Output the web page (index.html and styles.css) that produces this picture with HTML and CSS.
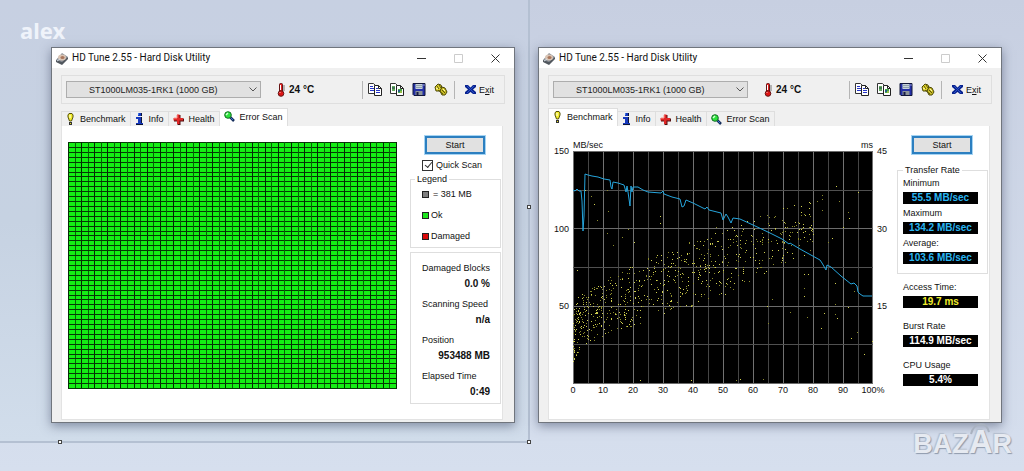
FILE: index.html
```html
<!DOCTYPE html>
<html lang="en">
<head>
<meta charset="utf-8">
<title>HD Tune 2.55 - Hard Disk Utility</title>
<link rel="stylesheet" href="styles.css">
</head>
<body>
<svg class="sprites" aria-hidden="true">
  <symbol id="i-disk" viewBox="0 0 13 13">
    <path d="M1 8L7 1l6 4-6 7-5-2z" fill="#8b9199"/><path d="M1 8l6 2 6-5v2l-6 6-6-3z" fill="#51575e"/>
    <ellipse cx="7" cy="5.5" rx="4" ry="3" fill="#d9c4b4"/><ellipse cx="7.5" cy="5.5" rx="2" ry="1.5" fill="#a9765c"/><path d="M2 9l3-2" stroke="#d5dde4"/>
  </symbol>
  <symbol id="i-temp" viewBox="0 0 8 14">
    <rect x="2.5" y=".5" width="3" height="9" rx="1" fill="#e32020" stroke="#641414"/><circle cx="4" cy="10.5" r="2.8" fill="#df1515" stroke="#641414"/><path d="M3.5 2v5" stroke="#fff"/><path d="M2.5 10l1-1" stroke="#fbb"/><path d="M7 2v6" stroke="#777"/>
  </symbol>
  <symbol id="i-copy" viewBox="0 0 14 13">
    <path d="M.5.5h5l2 2v8h-7z" fill="#fff" stroke="#333"/><path d="M2 3.5h3M2 5.500h4M2 7.500h4" stroke="#2736c8"/>
    <path d="M6.500 2.500h4l3 3v7h-7z" fill="#fff" stroke="#222"/><path d="M10.500 2.500v3h3" fill="none" stroke="#222"/><path d="M8 5.500h2M8 7.500h4M8 9.500h4" stroke="#2736c8"/>
  </symbol>
  <symbol id="i-shot" viewBox="0 0 14 13">
    <path d="M.5.5h5l2 2v8h-7z" fill="#fff" stroke="#333"/><path d="M2 3h3v5H2z" fill="#64ae61"/><path d="M2 5h3" stroke="#244"/>
    <path d="M6.500 2.500h4l3 3v7h-7z" fill="#fff" stroke="#222"/><path d="M10.500 2.500v3h3" fill="none" stroke="#222"/><path d="M8 6h4v4H8z" fill="#4aa847"/><path d="M8 7h2v2H8z" fill="#275f86"/><path d="M10 9h2" stroke="#e2d64a"/>
  </symbol>
  <symbol id="i-save" viewBox="0 0 13 13">
    <path d="M.5.5h12v12h-11l-1-1z" fill="#2430a8" stroke="#111638"/><path d="M3 1h7v5H3z" fill="#c8d3da"/><path d="M3 2.500h7M3 4.500h7" stroke="#8fa0ad"/><path d="M3 8h7v4H3z" fill="#8c9499"/><path d="M4 9h2v3H4z" fill="#161a48"/><path d="M11 2h1" stroke="#fff"/>
  </symbol>
  <symbol id="i-opts" viewBox="0 0 14 13">
    <path d="M1 4l3-3 3 1 1 3-2 3-4 0z" fill="#e5d72b" stroke="#4b4705"/><path d="M6 8l2-4 3 1 2 4-2 3-3 0z" fill="#c9bc24" stroke="#4b4705"/><path d="M3 3l2 3M8 7l3 3M4 7l5 4M5 2l2 3" stroke="#5c5609"/><path d="M2 5l2 1M9 6l2 2" stroke="#fffbb0"/>
  </symbol>
  <symbol id="i-exit" viewBox="0 0 11 11">
    <path d="M0 1h3l2.500 2.500L8 1h3v2L8 5.500 11 8v2H8L5.500 8 3 10H0V8l3-2.500L0 3z" fill="#0a2490"/><path d="M2 2l7 7M9 2L2 9" stroke="#2750c9"/>
  </symbol>
  <symbol id="i-bench" viewBox="0 0 7 12">
    <path d="M1 2l1-1.500h3L6 2v2L4.500 8h-2L1 4z" fill="#f4ee2c" stroke="#55500a"/><rect x="2.500" y="9.500" width="2" height="2" fill="#e4dd20" stroke="#333"/><path d="M3 2v3" stroke="#fff"/>
  </symbol>
  <symbol id="i-info" viewBox="0 0 7 12">
    <path d="M2 0h3v3H2zM1 4h4v6h2v2H0v-2h2V6H0V4z" fill="#1638bd"/><path d="M5.500 0v3M5.500 4v6M0 11.500h7" stroke="#0a1437"/><path d="M2 1h1" stroke="#70b7ff"/>
  </symbol>
  <symbol id="i-health" viewBox="0 0 11 11">
    <path d="M4.500 1h3v3.500H11v3H7.500V11h-3V7.500H1v-3h3.500z" fill="#530e0e"/><path d="M4 .5h2.500V4H10v2.500H6.500V10H4V6.500H.5V4H4z" fill="#e12727"/><path d="M4 1v3H1" fill="none" stroke="#ff9b91"/>
  </symbol>
  <symbol id="i-scan" viewBox="0 0 11 11">
    <path d="M6 6l4 4" stroke="#142c5b" stroke-width="2.500"/><path d="M6 6l3 3" stroke="#3977cf"/><circle cx="4" cy="4" r="3.300" fill="#2be33b" stroke="#146c24"/><path d="M2 4l2-2" stroke="#d5ffd8" stroke-width="1.500"/>
  </symbol>
</svg>

<main class="desktop">
  <div class="sheet"><i class="handle right"></i><i class="handle corner"></i><i class="handle left"></i></div>
  <span class="owner">alex</span>

  <section class="window">
    <header class="titlebar">
      <svg class="disk"><use href="#i-disk"/></svg><h1>HD Tune 2.55 - Hard Disk Utility</h1>
      <button class="cap" aria-label="Minimize"><svg viewBox="0 0 9 9"><path d="M0 4.500h9"/></svg></button>
      <button class="cap" aria-label="Maximize" disabled><svg viewBox="0 0 9 9"><path d="M.5.5h8v8h-8z"/></svg></button>
      <button class="cap" aria-label="Close"><svg viewBox="0 0 9 9"><path d="M.5.5l8 8M8.500.5l-8 8"/></svg></button>
    </header>
    <div class="body">
      <div class="toolbar">
        <span class="picker"><select aria-label="Drive"><option>ST1000LM035-1RK1 (1000 GB)</option></select><svg viewBox="0 0 8 5"><path d="M.5.5L4 4 7.500.5"/></svg></span>
        <svg class="temp"><use href="#i-temp"/></svg><b class="degrees">24 °C</b>
        <div class="tools">
          <button aria-label="Copy text"><svg><use href="#i-copy"/></svg></button>
          <button aria-label="Copy screenshot"><svg><use href="#i-shot"/></svg></button>
          <button aria-label="Save"><svg><use href="#i-save"/></svg></button>
          <button aria-label="Options"><svg><use href="#i-opts"/></svg></button>
        </div>
        <button class="exit"><svg><use href="#i-exit"/></svg><span>E<u>x</u>it</span></button>
      </div>
      <nav class="tabs">
        <button class="tab first"><svg class="slim"><use href="#i-bench"/></svg>Benchmark</button>
        <button class="tab"><svg class="slim"><use href="#i-info"/></svg>Info</button>
        <button class="tab"><svg><use href="#i-health"/></svg>Health</button>
        <button class="tab active"><svg><use href="#i-scan"/></svg>Error Scan</button>
      </nav>
      <div class="page scan">
        <svg class="blocks" viewBox="0 0 329 247" preserveAspectRatio="none" shape-rendering="crispEdges" aria-label="Block map">
          <rect width="329" height="247" fill="#14ee14"/><g id="block-lines"></g>
        </svg>
        <aside class="side">
          <button class="start">Start</button>
          <label class="quick"><input type="checkbox" checked>Quick Scan</label>
          <fieldset class="legend"><legend>Legend</legend>
            <p><i class="sw grey"></i><span class="eq">= 381 MB</span></p><p><i class="sw green"></i>Ok</p><p><i class="sw red"></i>Damaged</p>
          </fieldset>
          <dl class="stats">
            <dt>Damaged Blocks</dt><dd>0.0 %</dd>
            <dt>Scanning Speed</dt><dd>n/a</dd>
            <dt>Position</dt><dd>953488 MB</dd>
            <dt>Elapsed Time</dt><dd>0:49</dd>
          </dl>
        </aside>
      </div>
    </div>
  </section>

  <section class="window">
    <header class="titlebar">
      <svg class="disk"><use href="#i-disk"/></svg><h1>HD Tune 2.55 - Hard Disk Utility</h1>
      <button class="cap" aria-label="Minimize"><svg viewBox="0 0 9 9"><path d="M0 4.500h9"/></svg></button>
      <button class="cap" aria-label="Maximize" disabled><svg viewBox="0 0 9 9"><path d="M.5.5h8v8h-8z"/></svg></button>
      <button class="cap" aria-label="Close"><svg viewBox="0 0 9 9"><path d="M.5.5l8 8M8.500.5l-8 8"/></svg></button>
    </header>
    <div class="body">
      <div class="toolbar">
        <span class="picker"><select aria-label="Drive"><option>ST1000LM035-1RK1 (1000 GB)</option></select><svg viewBox="0 0 8 5"><path d="M.5.5L4 4 7.500.5"/></svg></span>
        <svg class="temp"><use href="#i-temp"/></svg><b class="degrees">24 °C</b>
        <div class="tools">
          <button aria-label="Copy text"><svg><use href="#i-copy"/></svg></button>
          <button aria-label="Copy screenshot"><svg><use href="#i-shot"/></svg></button>
          <button aria-label="Save"><svg><use href="#i-save"/></svg></button>
          <button aria-label="Options"><svg><use href="#i-opts"/></svg></button>
        </div>
        <button class="exit"><svg><use href="#i-exit"/></svg><span>E<u>x</u>it</span></button>
      </div>
      <nav class="tabs">
        <button class="tab first active"><svg class="slim"><use href="#i-bench"/></svg>Benchmark</button>
        <button class="tab"><svg class="slim"><use href="#i-info"/></svg>Info</button>
        <button class="tab"><svg><use href="#i-health"/></svg>Health</button>
        <button class="tab"><svg><use href="#i-scan"/></svg>Error Scan</button>
      </nav>
      <div class="page bench">
        <figure class="graph">
          <div class="units"><span>MB/sec</span><span>ms</span></div>
          <div class="yaxis speed"><span>150</span><span>100</span><span>50</span><span></span></div>
          <svg class="plot" viewBox="0 0 300 233" preserveAspectRatio="none">
            <rect width="300" height="233"/><g id="plot-grid"></g><g id="plot-dots"></g><path id="plot-line"/>
          </svg>
          <div class="yaxis access"><span>45</span><span>30</span><span>15</span><span></span></div>
          <div class="xaxis"><span>0</span><span>10</span><span>20</span><span>30</span><span>40</span><span>50</span><span>60</span><span>70</span><span>80</span><span>90</span><span>100%</span></div>
        </figure>
        <aside class="side">
          <button class="start">Start</button>
          <fieldset class="rate"><legend>Transfer Rate</legend>
            <span>Minimum</span><output>55.5 MB/sec</output>
            <span>Maximum</span><output>134.2 MB/sec</output>
            <span>Average:</span><output>103.6 MB/sec</output>
          </fieldset>
          <div class="reading"><span>Access Time:</span><output class="yellow">19.7 ms</output></div>
          <div class="reading"><span>Burst Rate</span><output class="white">114.9 MB/sec</output></div>
          <div class="reading"><span>CPU Usage</span><output class="white">5.4%</output></div>
        </aside>
      </div>
    </div>
  </section>

  <div class="brand"><span>BAZ</span><span class="big">A</span><span>R</span><svg viewBox="0 0 24 12"><path d="M2 11C5-1 17-2 20 9"/></svg></div>
</main>
<script src="app.js"></script>
</body>
</html>
```
FILE: styles.css
```css
* { box-sizing: border-box; }
body { margin: 0; font: 9px/12px "Liberation Sans", Arial, sans-serif; color: #111; }
button { font: inherit; color: inherit; margin: 0; padding: 0; border: 0; background: none; }
h1, p, dl, dd, figure { margin: 0; }
svg { display: block; flex: none; }
.sprites { position: absolute; width: 0; height: 0; }

.desktop {
  position: relative; min-height: 100vh; overflow: hidden;
  display: flex; align-items: flex-start; gap: 23px; padding: 47px 22px 48px 51px;
  background: linear-gradient(#c7cfe1, #d6dfee);
}
.sheet {
  position: absolute; left: 0; top: 0; bottom: 28px; width: 530px;
  background: linear-gradient(#c7d0e2, #c6d2e2 50%, #d1ddeb);
  border-right: 2px solid #b4c0d2; border-bottom: 2px solid #b4c0d2;
}
.handle { position: absolute; width: 4px; height: 4px; background: #fff; border: 1px solid #444; }
.handle.right { right: -3px; top: 205px; }
.handle.corner { right: -3px; bottom: -3px; }
.handle.left { left: 58px; bottom: -3px; }
.owner { position: absolute; left: 20px; top: 18px; font: bold 22px/24px "Noto Sans", sans-serif; color: #eff3fa; }

.window {
  position: relative; flex: 1 1 0; min-width: 0; background: #f0f0f0;
  border: 1px solid #70757d; box-shadow: 0 3px 10px rgba(50, 60, 90, .5);
}
.titlebar { display: flex; align-items: center; height: 20px; background: #fff; padding-left: 3px; }
.disk { width: 13px; height: 13px; }
.titlebar h1 { flex: 1; margin-left: 4px; font: 10px/14px Roboto, sans-serif; color: #111; white-space: nowrap; }
.cap { width: 37px; height: 20px; display: flex; justify-content: center; align-items: center; }
.cap svg { width: 9px; height: 9px; fill: none; stroke: #333; }
.cap:disabled svg { stroke: #ccc; }

.body { padding: 7px 9px 2px; }
.toolbar { display: flex; align-items: center; height: 29px; border: 1px solid #dfdfdf; padding: 0 4px; }
.picker { position: relative; flex: 0 1 195px; }
.picker select {
  appearance: none; display: block; width: 100%; height: 17px; padding: 0 20px 0 22px; margin: 0;
  border: 1px solid #adadad; border-radius: 0; background: #e1e1e1; font: inherit; color: #222;
}
.picker svg { position: absolute; right: 4px; top: 6px; width: 8px; height: 5px; fill: none; stroke: #555; }
.temp { width: 8px; height: 14px; margin-left: 16px; }
.degrees { margin-left: 4px; font: bold 10px/12px "Liberation Sans", sans-serif; color: #111; }
.tools { display: flex; gap: 8px; margin-left: auto; height: 18px; align-items: center; padding: 0 6px 0 5px; border: solid #b5b5b5; border-width: 0 1px; }
.tools svg { width: 14px; height: 13px; }
.exit { display: flex; align-items: center; gap: 3px; margin: 0 6px 0 10px; }
.exit svg { width: 11px; height: 11px; }

.tabs { display: flex; align-items: flex-end; height: 18px; margin-top: 4px; }
.tab { display: flex; align-items: center; gap: 5px; height: 15px; padding: 0 4px; border: solid #dedede; border-width: 1px 1px 0 0; white-space: nowrap; }
.tab svg { width: 11px; height: 11px; }
.tab svg.slim { width: 7px; height: 12px; margin: 0 1px; }
.tab.first { border-left-width: 1px; }
.tab.active { height: 18px; background: #fff; padding-bottom: 2px; }
.page { display: flex; height: 294px; background: #fff; border: 1px solid #e3e3e3; border-top: 0; margin-right: 2px; padding-right: 1px; }
.side { flex: none; width: 91px; }
.start { display: block; width: 60px; height: 18px; margin: 0 0 0 15px; background: #e1e1e1; border: 2px solid #2c7fc0; box-shadow: 0 0 0 1px #a5d4f3; }

.scan { padding-top: 10px; }
.blocks { flex: 1 1 0; min-width: 0; height: 247px; margin: 6px 13px 0 6px; }
.quick { display: flex; align-items: center; gap: 3px; margin: 5px 0 0 12px; height: 12px; white-space: nowrap; }
.quick input { width: 11px; height: 11px; margin: 0; appearance: none; background: #fff; border: 1px solid #333; position: relative; }
.quick input:checked::after { content: ""; position: absolute; left: 2px; top: 1px; width: 6px; height: 3px; border: solid #333; border-width: 0 0 1px 1px; transform: rotate(-50deg); }
fieldset { margin: 0; min-width: 0; border: 1px solid #dedede; }
legend { padding: 0 2px; margin-left: 5px; line-height: 12px; white-space: nowrap; }
.legend { height: 75px; margin-top: 2px; padding: 3px 0 0 11px; }
.legend legend { margin-left: -7px; }
.legend p { display: flex; align-items: center; gap: 2px; height: 12px; margin-bottom: 9px; }
.eq { margin-left: 2px; }
.sw { width: 7px; height: 7px; border: 1px solid #222; }
.grey { background: #808080; }
.green { background: #1ce61c; }
.red { background: #dc0b0b; }
.stats { height: 152px; margin-top: 4px; padding: 9px 10px 0 11px; border: 1px solid #dedede; }
.stats dt { white-space: nowrap; height: 15px; }
.stats dd { text-align: right; height: 21px; font: bold 10px/13px "Liberation Sans", sans-serif; color: #111; white-space: nowrap; }

.bench { padding-top: 10px; }
.graph {
  flex: 1; min-width: 0; display: grid; grid-template-columns: 24px 1fr 24px; grid-template-rows: 15px 233px 14px;
  font: 9px/12px "Liberation Sans", sans-serif;
}
.units { grid-column: 2; display: flex; justify-content: space-between; padding-top: 4px; line-height: 10px; }
.yaxis { display: flex; flex-direction: column; justify-content: space-between; margin: -6px 0; }
.yaxis span { height: 12px; }
.speed { grid-column: 1; grid-row: 2; text-align: right; padding-right: 4px; }
.access { grid-column: 3; grid-row: 2; padding-left: 4px; }
.plot { grid-column: 2; grid-row: 2; width: 100%; height: 233px; }
#plot-line { fill: none; stroke: #26a5dc; stroke-width: 1; }
.xaxis { grid-column: 2; grid-row: 3; display: flex; justify-content: space-between; margin: 0 -12px; }
.xaxis span { width: 24px; text-align: center; }
.rate { display: flex; flex-direction: column; height: 110px; margin-top: 10px; padding: 1px 9px 0 5px; }
.rate legend { margin-left: 0; }
.rate span { height: 15px; }
.rate output { margin-bottom: 3px; }
output { display: block; height: 12px; background: #000; color: #29b6f2; text-align: center; font: bold 10px/12px "Liberation Sans", sans-serif; white-space: nowrap; }
.reading { height: 39px; padding: 7px 10px 0 6px; }
.reading span { display: block; height: 15px; }
.reading output { color: #fff; }
.reading output.yellow { color: #f2ee2c; }

.brand {
  position: absolute; right: 12px; bottom: 10px; display: flex; align-items: baseline;
  font: bold 27px/34px "Liberation Sans", sans-serif; color: #e6eaf1;
  text-shadow: 1px 1px 1px #8e99ab, -1px -1px 1px #b3bdcc;
}
.brand .big { font-size: 33px; }
.brand svg { position: absolute; right: 19px; top: -2px; width: 24px; height: 12px; fill: none; stroke: #a9b2c0; stroke-width: 2; }
```
FILE: app.js
```js
const put = (id, html) => { document.getElementById(id).innerHTML = html; };

// Block map: 50 columns by 50 rows.
let lines = "";
for (let i = 0; i <= 50; i++) {
  const x = Math.round(i * 6.56), y = Math.round(i * 4.92);
  lines += `<rect x="${x}" width="1" height="247" fill="${i % 2 ? "#086008" : "#062806"}"/>`;
  lines += `<rect y="${y}" width="329" height="1" fill="#063806"/>`;
}
put("block-lines", lines);

let grid = "";
for (let i = 0; i <= 20; i++) grid += `<rect x="${Math.min(i * 15, 299)}" width="1" height="233" fill="${i % 2 ? "#454545" : "#717171"}"/>`;
for (let i = 0; i <= 6; i++) grid += `<rect y="${Math.round(i * 38.66)}" width="300" height="1" fill="${i % 2 ? "#505050" : "#6b6b6b"}"/>`;
put("plot-grid", grid);

// Transfer speed samples in plot units.
const curve = [0,39,2,40,4,38,6,40,8,40,9,50,10,80,11,65,12,23,15,24,19,25,25,26,31,28,37,29,38,36,39,38,40,31,45,32,51,34,53,41,54,35,55,41,57,55,58,35,59,41,60,36,65,36,70,39,75,41,88,42,90,40,91,43,99,46,107,48,109,56,111,55,113,49,120,52,132,58,134,56,136,59,148,62,150,69,153,63,155,66,158,72,160,67,167,68,180,74,197,82,209,88,216,93,217,92,227,98,247,109,249,112,253,119,254,114,258,116,268,125,278,133,281,132,284,135,285,141,287,143,290,145,299,145];
let path = "";
for (let i = 0; i < curve.length; i += 2) path += `${i ? "L" : "M"}${curve[i]} ${curve[i + 1]}`;
document.getElementById("plot-line").setAttribute("d", path);

// Access time samples.
let seed = 41;
const rnd = () => (seed = (seed * 16807) % 2147483647) / 2147483647;
const lerp = (pts, x) => {
  for (let i = 1; i < pts.length; i++) if (x <= pts[i][0]) {
    const [a, b] = [pts[i - 1], pts[i]];
    return a[1] + (b[1] - a[1]) * (x - a[0]) / (b[0] - a[0]);
  }
  return pts[pts.length - 1][1];
};
const upper = [[0, 155], [8, 140], [40, 122], [100, 96], [150, 78], [200, 60], [250, 45], [300, 40]];
const lower = [[0, 213], [10, 195], [50, 178], [100, 160], [150, 145], [200, 118], [250, 95], [300, 90]];
let dots = "";
const dot = (x, y) => { dots += `<rect x="${Math.round(x)}" y="${Math.round(y)}" width="1" height="1" fill="${rnd() > .5 ? "#d0cf50" : "#8b8b2c"}"/>`; };
for (let i = 0; i < 740; i++) {
  const x = Math.pow(rnd(), 1.35) * 240;
  const t = i % 3 ? rnd() : (rnd() + rnd()) / 2;
  dot(x, lerp(upper, x) + t * (lerp(lower, x) - lerp(upper, x)));
}
[[18,45],[21,53],[24,69],[34,39],[35,60],[12,39],[87,65],[87,72],[55,78],[34,82],[40,94],[49,86],[61,91],[4,119],[143,76],[67,229],[118,229],[163,229],[167,228],[190,228],[263,35],[285,41],[266,50],[275,61],[276,67],[255,91],[259,87],[270,76],[281,140],[262,132],[275,156],[262,153],[264,167],[251,162],[248,177],[234,166],[217,161],[199,148],[195,172],[231,137],[231,145],[262,163],[278,187],[284,181],[299,190],[291,203],[194,155],[249,59],[249,48],[244,50],[236,51],[249,44],[231,123],[235,123]].forEach(p => dot(p[0], p[1]));
put("plot-dots", dots);
```
